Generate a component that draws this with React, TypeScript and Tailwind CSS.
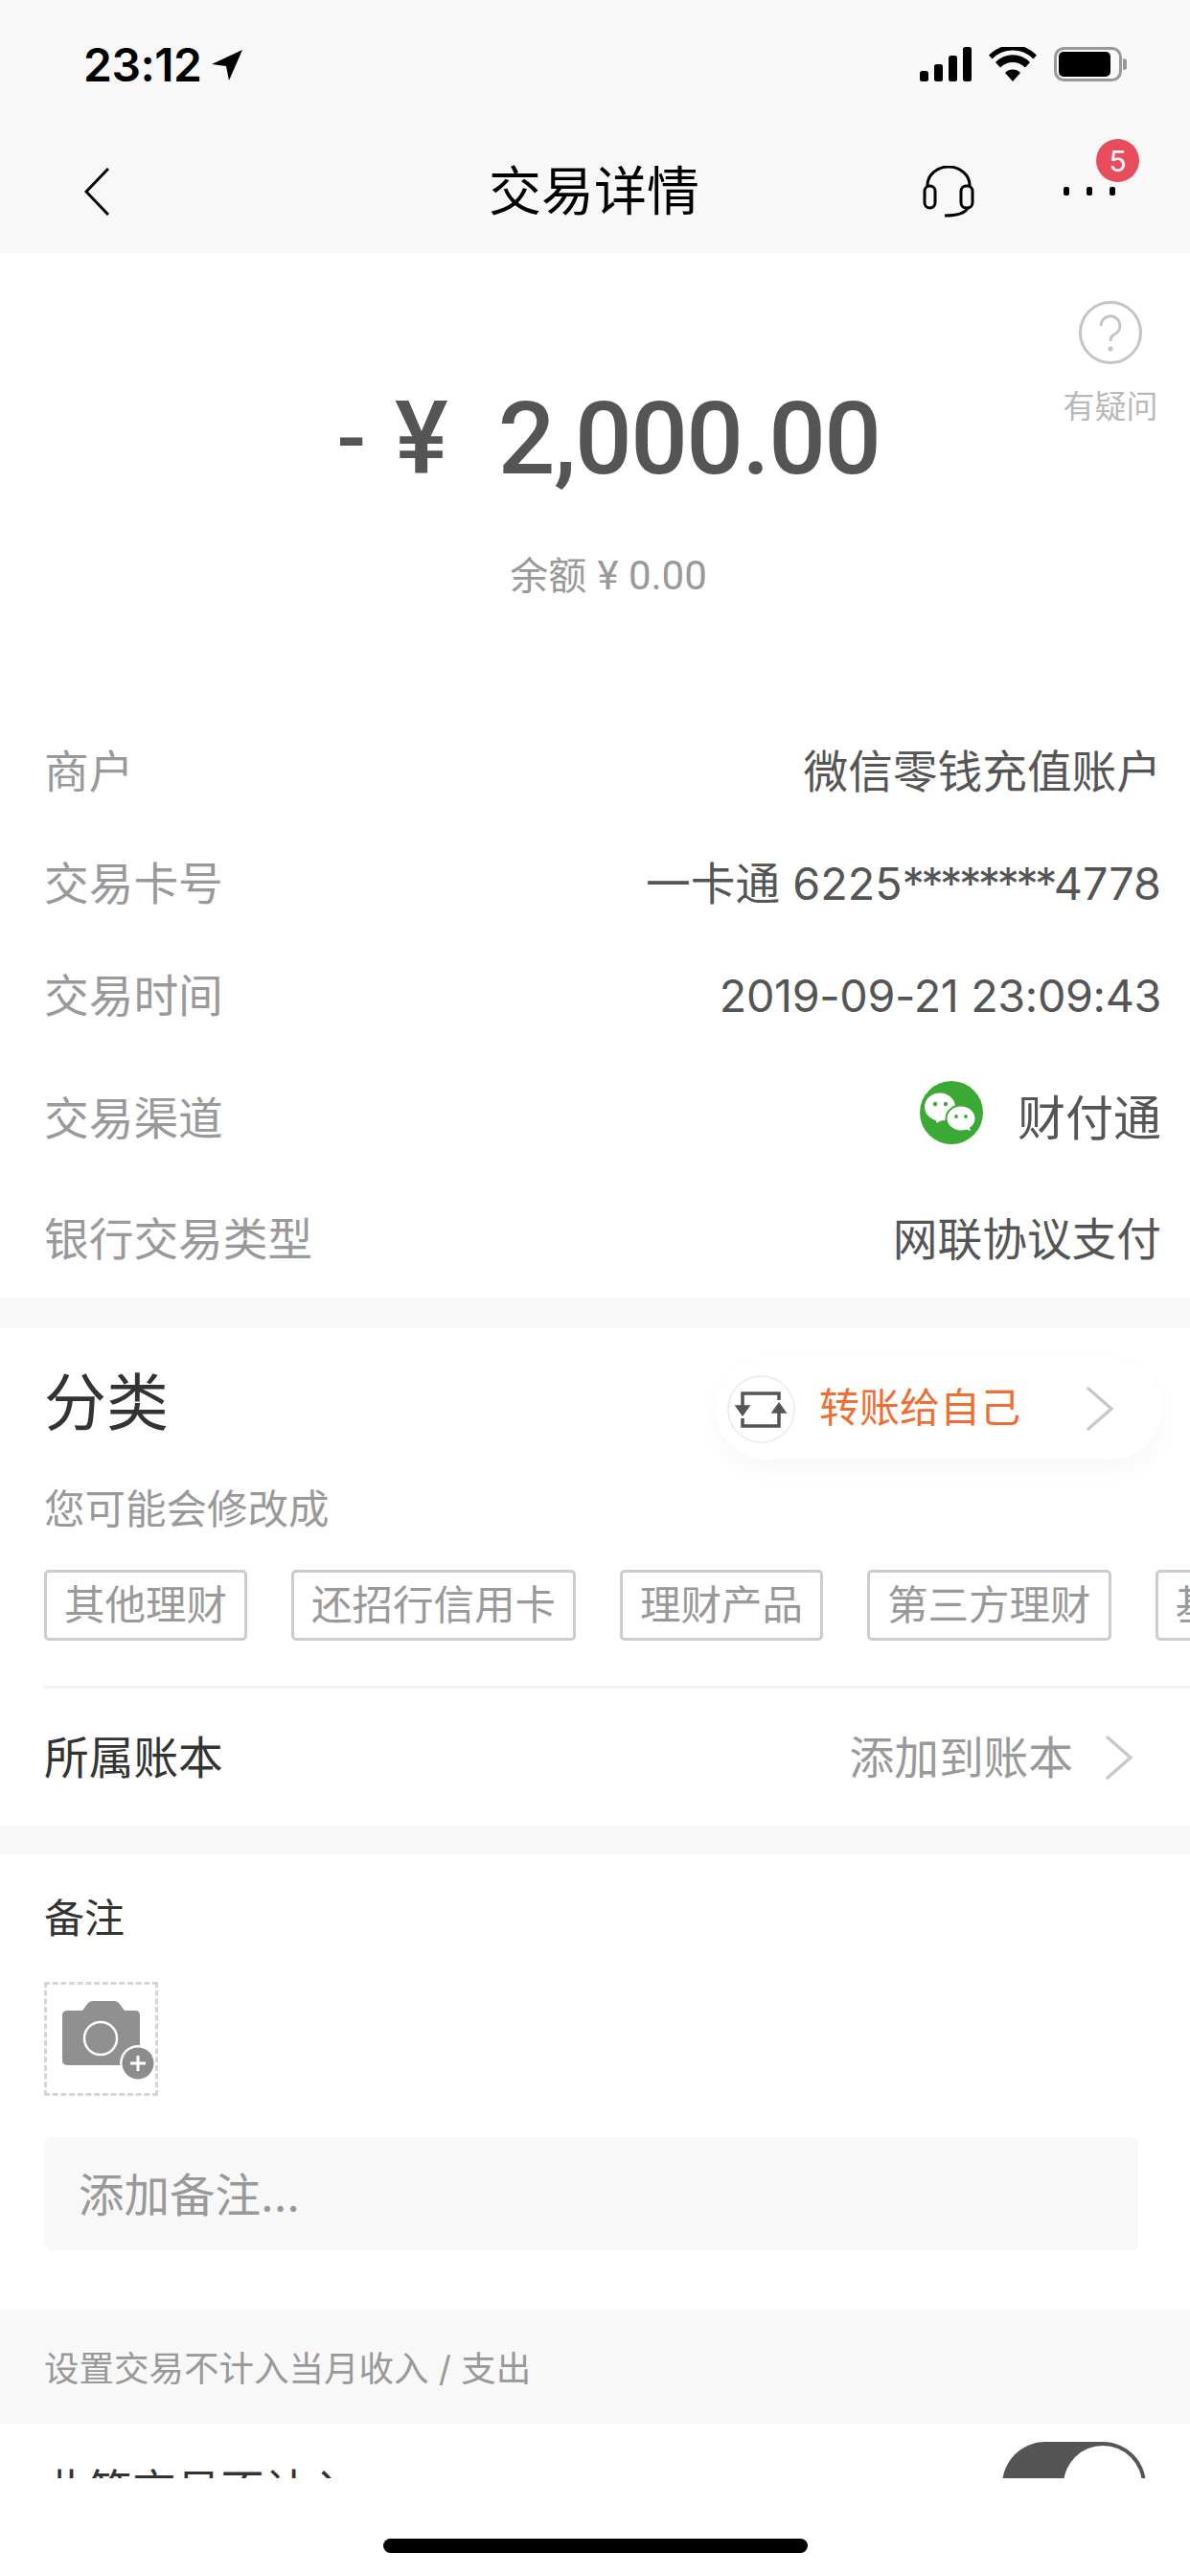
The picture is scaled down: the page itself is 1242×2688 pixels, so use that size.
const FONT = "font-['Inter','Noto_Sans_CJK_SC',sans-serif]";

function StatusBar() {
  return (
    <div className="flex h-[135px] items-start justify-between pl-[87px] pr-[66px] pt-[47px]">
      <div className="flex items-center gap-[10px]">
        <span className="text-[48px] leading-[42px] font-semibold tracking-[-0.5px] text-black">23:12</span>
        <svg viewBox="0 0 34 34" className="h-[34px] w-[34px]">
          <path d="M33 1 L1 16 L16 18 L19 33 Z" fill="#000" />
        </svg>
      </div>
      <div className="flex items-center gap-[18px] pt-[2px]">
        <svg viewBox="0 0 54 36" className="h-[36px] w-[54px]">
          <rect x="0" y="25" width="9" height="11" rx="2.5" />
          <rect x="15" y="18" width="9" height="18" rx="2.5" />
          <rect x="30" y="9" width="9" height="27" rx="2.5" />
          <rect x="45" y="0" width="9" height="36" rx="2.5" />
        </svg>
        <svg viewBox="0 0 50 36" className="h-[36px] w-[50px]">
          <path d="M25 36 L17 27 A11 11 0 0 1 33 27 Z" />
          <path d="M12 21.5 L7 16 A25 25 0 0 1 43 16 L38 21.5 A18 18 0 0 0 12 21.5 Z" />
          <path d="M3.5 12.5 L0 8.5 A35 35 0 0 1 50 8.5 L46.5 12.5 A30 30 0 0 0 3.5 12.5 Z" />
        </svg>
        <svg viewBox="0 0 76 36" className="h-[36px] w-[76px]">
          <rect x="1.5" y="1.5" width="68" height="33" rx="9" fill="none" stroke="#999" strokeWidth="3" />
          <rect x="5" y="5" width="54" height="26" rx="5" fill="#000" />
          <path d="M72 12 A6 6 0 0 1 72 24 Z" fill="#999" />
        </svg>
      </div>
    </div>
  );
}

function NavBar() {
  return (
    <div className="relative flex h-[129px] items-center justify-between pl-[88px] pr-[78px]">
      <svg viewBox="0 0 26 50" fill="none" stroke="#000" strokeWidth="3" className="h-[50px] w-[26px]">
        <path d="M25 1 L2 25 L25 49" />
      </svg>
      <span className="absolute left-[510px] top-[33px] text-[55px] leading-[62px] text-black">交易详情</span>
      <div className="flex items-center gap-[93px]">
        <svg viewBox="0 0 54 54" fill="none" stroke="#000" strokeWidth="3" className="h-[54px] w-[54px]">
          <path d="M5 22 V20 A22 19 0 0 1 49 20 V22" />
          <rect x="2" y="21" width="11" height="23" rx="5.5" />
          <rect x="40" y="21" width="12" height="23" rx="5.5" />
          <path d="M47 44 C44 50 35 52 23 52" />
        </svg>
        <div className="flex gap-[18px]">
          <span className="h-[9px] w-[6px] rounded-[2px] bg-black" />
          <span className="h-[9px] w-[6px] rounded-[2px] bg-black" />
          <span className="h-[9px] w-[6px] rounded-[2px] bg-black" />
        </div>
      </div>
      <span className="absolute left-[1144px] top-[10px] flex h-[45px] w-[45px] items-center justify-center rounded-full bg-[#e94d5d] text-[30px] leading-none text-white">
        5
      </span>
    </div>
  );
}

function Hero() {
  return (
    <div className="relative flex h-[482px] flex-col items-center pt-[136px]">
      <div className="flex h-[116px] items-center pl-[28px] font-['Roboto'] text-[#555]">
        <span className="text-[90px] leading-none font-medium">-</span>
        <span className="ml-[30px] text-[105px] leading-none font-medium">¥</span>
        <span className="ml-[52px] text-[105px] leading-none font-medium tracking-[-1.5px]">2,000.00</span>
      </div>
      <div className="mt-[60px] pl-[28px] text-[40px] leading-[50px] text-[#999]">
        余额 <span className="font-['Roboto'] text-[42px]">¥ 0.00</span>
      </div>
      <div className="absolute right-[34px] top-[50px] flex w-[98px] flex-col items-center">
        <svg viewBox="0 0 66 66" fill="none" className="h-[66px] w-[66px]">
          <circle cx="33" cy="33" r="31.5" stroke="#c4c4c4" strokeWidth="3" />
          <path d="M23 26 A10 10 0 1 1 37 35 C34 37 33 38 33 42" stroke="#c4c4c4" strokeWidth="3" />
          <circle cx="33" cy="50" r="2.5" fill="#c4c4c4" />
        </svg>
        <span className="mt-[24px] whitespace-nowrap text-[33px] leading-[40px] text-[#b9b9b9]">有疑问</span>
      </div>
    </div>
  );
}

function WeChatIcon() {
  return (
    <svg viewBox="0 0 66 66" className="-mt-[12px] h-[66px] w-[66px]">
      <circle cx="33" cy="33" r="33" fill="#3aaa35" />
      <ellipse cx="21" cy="27" rx="16" ry="14.5" fill="#fff" />
      <path d="M15 38 L18 44 L25 39 Z" fill="#fff" />
      <ellipse cx="43" cy="39" rx="15.5" ry="13.5" stroke="#3aaa35" strokeWidth="2" fill="#fff" />
      <path d="M47 50 L53 52 L51 46 Z" fill="#fff" />
      <circle cx="16" cy="24" r="2.2" fill="#3aaa35" />
      <circle cx="27" cy="24" r="2.2" fill="#3aaa35" />
      <circle cx="38" cy="37" r="1.9" fill="#3aaa35" />
      <circle cx="48" cy="37" r="1.9" fill="#3aaa35" />
    </svg>
  );
}

function InfoRow({ label, className, children }: { label: string; className: string; children: React.ReactNode }) {
  return (
    <div className={`flex items-center justify-between pl-[46px] pr-[30px] text-[46.7px] leading-[56px] ${className}`}>
      <span className="text-[#999]">{label}</span>
      <div className="flex items-center text-[#555]">{children}</div>
    </div>
  );
}

function Chevron({ className }: { className: string }) {
  return (
    <svg viewBox="0 0 28 46" fill="none" stroke="#c8c8c8" strokeWidth="3.5" strokeLinecap="round" className={className}>
      <path d="M2 2 L26 23 L2 44" />
    </svg>
  );
}

function Category() {
  return (
    <div className="bg-white">
      <div className="flex items-center justify-between pl-[46px] pr-[30px] pt-[32px]">
        <span className="-mt-[12px] text-[65px] leading-[80px] text-[#333]">分类</span>
        <div className="flex h-[106px] w-[465px] items-center rounded-full bg-white pl-[12px] pr-[50px] shadow-[0_10px_24px_rgba(0,0,0,0.035)]">
          <div className="flex h-[71px] w-[71px] items-center justify-center rounded-full border-2 border-[#eee]">
            <svg viewBox="0 0 71 71" fill="none" stroke="#555" strokeWidth="3.5" className="h-[71px] w-[71px] shrink-0">
              <path d="M16 33 V19 H54 V26 M16 45 V53 H54 V38" />
              <path d="M11 33 H21 L16 40 Z M49 38 H59 L54 31 Z" fill="#555" />
            </svg>
          </div>
          <span className="ml-[25px] -mt-[2px] text-[42px] leading-[50px] text-[#ef6f33]">转账给自己</span>
          <Chevron className="ml-auto h-[46px] w-[28px]" />
        </div>
      </div>
      <div className="mt-[27px] pl-[46px] text-[42.5px] leading-[50px] text-[#999]">您可能会修改成</div>
      <div className="mt-[38px] flex gap-[46px] overflow-hidden pl-[46px]">
        {["其他理财", "还招行信用卡", "理财产品", "第三方理财", "基金理财"].map((t) => (
          <span
            key={t}
            className="flex h-[74px] shrink-0 items-center rounded-[5px] border-[3px] border-[#ccc] px-[18px] text-[42.5px] leading-none text-[#999]"
          >
            {t}
          </span>
        ))}
      </div>
      <div className="ml-[46px] mt-[47px] h-[3px] bg-[#f0f0f0]" />
      <div className="flex h-[143px] items-center justify-between pl-[46px] pr-[60px]">
        <span className="text-[46.7px] leading-[56px] text-[#333]">所属账本</span>
        <div className="flex items-center gap-[34px]">
          <span className="text-[46.7px] leading-[56px] text-[#999]">添加到账本</span>
          <Chevron className="h-[46px] w-[28px]" />
        </div>
      </div>
    </div>
  );
}

function Note() {
  return (
    <div className="bg-white pb-[62px] pl-[46px] pr-[54px] pt-[42px]">
      <div className="text-[42px] leading-[50px] text-[#333]">备注</div>
      <div className="mt-[41px] h-[119px] w-[119px] border-[3px] border-dashed border-[#d5d5d5]">
        <svg viewBox="0 0 113 113" className="h-[113px] w-[113px]">
          <path
            d="M22 27 H37 L43 19 Q45 17 48 17 H70 Q73 17 75 19 L81 27 H92 Q97 27 97 32 V79 Q97 84 92 84 H22 Q16 84 16 79 V32 Q16 27 22 27 Z"
            fill="#909090"
          />
          <circle cx="56" cy="56" r="17" fill="none" stroke="#fff" strokeWidth="2.5" />
          <circle cx="95" cy="82" r="19" fill="#fff" />
          <circle cx="95" cy="82" r="16.5" fill="#8c8c8c" />
          <path d="M95 74 V90 M87 82 H103" stroke="#fff" strokeWidth="3" />
        </svg>
      </div>
      <div className="mt-[43px] flex h-[118px] items-center rounded-[8px] bg-[#f8f8f8] pl-[36px] pt-[3px] text-[47.5px] leading-[56px] text-[#999]">
        添加备注...
      </div>
    </div>
  );
}

export default function App() {
  return (
    <div className={`relative h-[2688px] w-[1242px] overflow-hidden bg-white ${FONT}`}>
      <div className="h-[2586px] overflow-hidden bg-white">
        <div className="bg-[#f8f8f8]">
          <StatusBar />
          <NavBar />
        </div>
        <Hero />
        <div className="h-[609px] bg-white">
          <InfoRow label="商户" className="h-[117px]">微信零钱充值账户</InfoRow>
          <InfoRow label="交易卡号" className="h-[117px]">
            一卡通 6225<span className="tracking-[-3.6px]">********</span>4778
          </InfoRow>
          <InfoRow label="交易时间" className="h-[117px]">
            <span className="tracking-[-0.35px]">2019-09-21 23:09:43</span>
          </InfoRow>
          <InfoRow label="交易渠道" className="h-[140px]">
            <WeChatIcon />
            <span className="ml-[36px] text-[50px]">财付通</span>
          </InfoRow>
          <InfoRow label="银行交易类型" className="h-[112px]">网联协议支付</InfoRow>
        </div>
        <div className="h-[30px] bg-[#f8f8f8]" />
        <Category />
        <div className="h-[30px] bg-[#f8f8f8]" />
        <Note />
        <div className="flex h-[120px] items-center bg-[#f8f8f8] pl-[46px] pt-[3px] text-[36.5px] leading-[46px] text-[#999]">
          设置交易不计入当月收入 / 支出
        </div>
        <div className="flex items-start justify-between pl-[46px] pr-[46px] pt-[18px]">
          <span className="mt-[22px] text-[46px] leading-[56px] text-[#333]">此笔交易不计入</span>
          <div className="flex h-[90px] w-[150px] items-center justify-end rounded-full bg-[#555] pr-[4px]">
            <div className="h-[82px] w-[82px] rounded-full bg-white" />
          </div>
        </div>
      </div>
      <div className="absolute bottom-[24px] left-[400px] h-[15px] w-[443px] rounded-full bg-black" />
    </div>
  );
}
